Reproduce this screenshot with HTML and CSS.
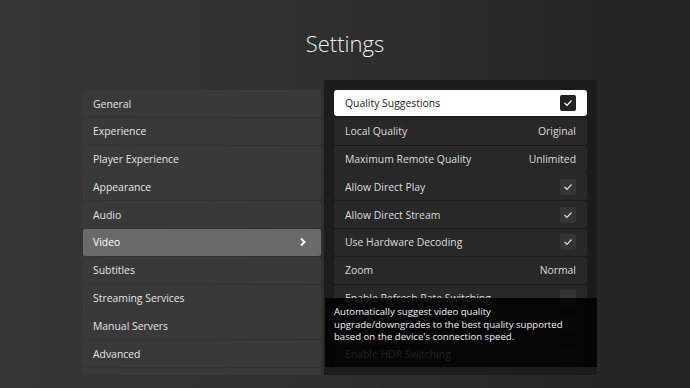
FILE: index.html
```html
<!DOCTYPE html>
<html lang="en">
<head>
  <meta charset="UTF-8">
  <title>Settings</title>
  <link rel="stylesheet" href="styles.css">
</head>
<body>
  <div class="screen">
    <header class="title">Settings</header>

    <main class="settings">
      <nav class="menu">
        <div class="menu-item">General</div>
        <div class="menu-item">Experience</div>
        <div class="menu-item">Player Experience</div>
        <div class="menu-item">Appearance</div>
        <div class="menu-item">Audio</div>
        <div class="menu-item active">Video
          <svg class="chevron" width="8" height="10" viewBox="0 0 8 10"><path d="M2 1.5 L5.5 5 L2 8.5" fill="none" stroke="#fff" stroke-width="1.8"/></svg>
        </div>
        <div class="menu-item">Subtitles</div>
        <div class="menu-item">Streaming Services</div>
        <div class="menu-item">Manual Servers</div>
        <div class="menu-item">Advanced</div>
        <div class="menu-item"></div>
      </nav>

      <section class="panel">
        <div class="option focused">
          <span>Quality Suggestions</span>
          <span class="check"><svg width="10" height="8" viewBox="0 0 10 8"><path d="M1.5 4 L4 6.3 L8.5 1.5" fill="none" stroke="#fff" stroke-width="1.2"/></svg></span>
        </div>
        <div class="option"><span>Local Quality</span><span class="value">Original</span></div>
        <div class="option"><span>Maximum Remote Quality</span><span class="value">Unlimited</span></div>
        <div class="option">
          <span>Allow Direct Play</span>
          <span class="check"><svg width="10" height="8" viewBox="0 0 10 8"><path d="M1.5 4 L4 6.3 L8.5 1.5" fill="none" stroke="#ddd" stroke-width="1.2"/></svg></span>
        </div>
        <div class="option">
          <span>Allow Direct Stream</span>
          <span class="check"><svg width="10" height="8" viewBox="0 0 10 8"><path d="M1.5 4 L4 6.3 L8.5 1.5" fill="none" stroke="#ddd" stroke-width="1.2"/></svg></span>
        </div>
        <div class="option">
          <span>Use Hardware Decoding</span>
          <span class="check"><svg width="10" height="8" viewBox="0 0 10 8"><path d="M1.5 4 L4 6.3 L8.5 1.5" fill="none" stroke="#ddd" stroke-width="1.2"/></svg></span>
        </div>
        <div class="option"><span>Zoom</span><span class="value">Normal</span></div>
        <div class="option"><span>Enable Refresh Rate Switching</span><span class="check"></span></div>
        <div class="option"><span></span><span class="check"></span></div>
        <div class="option"><span>Enable HDR Switching</span><span class="check"></span></div>

        <div class="tooltip">Automatically suggest video quality upgrade/downgrades to the best quality supported based on the device's connection speed.</div>
      </section>
    </main>
  </div>
</body>
</html>
```

FILE: styles.css
```css
body {
  margin: 0;
  font-family: "Open Sans", Arial, sans-serif;
  color: #e6e6e6;
  background-color: #2b2b2b;
}

.screen {
  width: 690px;
  height: 388px;
  overflow: hidden;
  background: linear-gradient(90deg, #363636 0%, #303030 45%, #222222 100%);
}

.title {
  height: 80px;
  padding-top: 28px;
  box-sizing: border-box;
  text-align: center;
  font-size: 22px;
  font-weight: 300;
  color: #f0f0f0;
  line-height: 30px;
}

.settings {
  display: flex;
  align-items: flex-start;
  padding-left: 83px;
}

.menu {
  width: 238px;
  margin-top: 10px;
  height: 285px;
  overflow: hidden;
  display: flex;
  flex-direction: column;
  gap: 0.8px;
}

.menu-item {
  flex: 0 0 27px;
  display: flex;
  align-items: center;
  justify-content: space-between;
  padding: 0 14px 0 10px;
  background-color: #393939;
  border-radius: 2px;
  font-size: 10.4px;
  color: #e4e4e4;
}

.menu-item.active {
  background-color: #6a6a6a;
  color: #fff;
}

.panel {
  position: relative;
  width: 273px;
  height: 295px;
  margin-left: 3px;
  padding: 10px;
  box-sizing: border-box;
  background-color: #1c1c1c;
  overflow: hidden;
  display: flex;
  flex-direction: column;
  gap: 0.8px;
}

.option {
  flex: 0 0 27px;
  display: flex;
  align-items: center;
  justify-content: space-between;
  padding: 0 11px;
  background-color: #282828;
  border-radius: 2px;
  font-size: 10.4px;
  color: #dcdcdc;
}

.option.focused {
  height: 26px;
  flex-basis: 26px;
  margin-bottom: 1px;
  background-color: #fff;
  color: #1a1a1a;
  border-radius: 3px;
}

.check {
  width: 16px;
  height: 16px;
  border-radius: 2px;
  background-color: #353535;
  display: flex;
  align-items: center;
  justify-content: center;
}

.focused .check {
  background-color: #222;
}

.tooltip {
  position: absolute;
  left: 1px;
  right: 0;
  top: 218px;
  height: 69px;
  padding: 8px 20px 8px 9px;
  box-sizing: border-box;
  background-color: rgba(0, 0, 0, 0.86);
  font-size: 9.6px;
  line-height: 12.5px;
  color: #f2f2f2;
}
```
